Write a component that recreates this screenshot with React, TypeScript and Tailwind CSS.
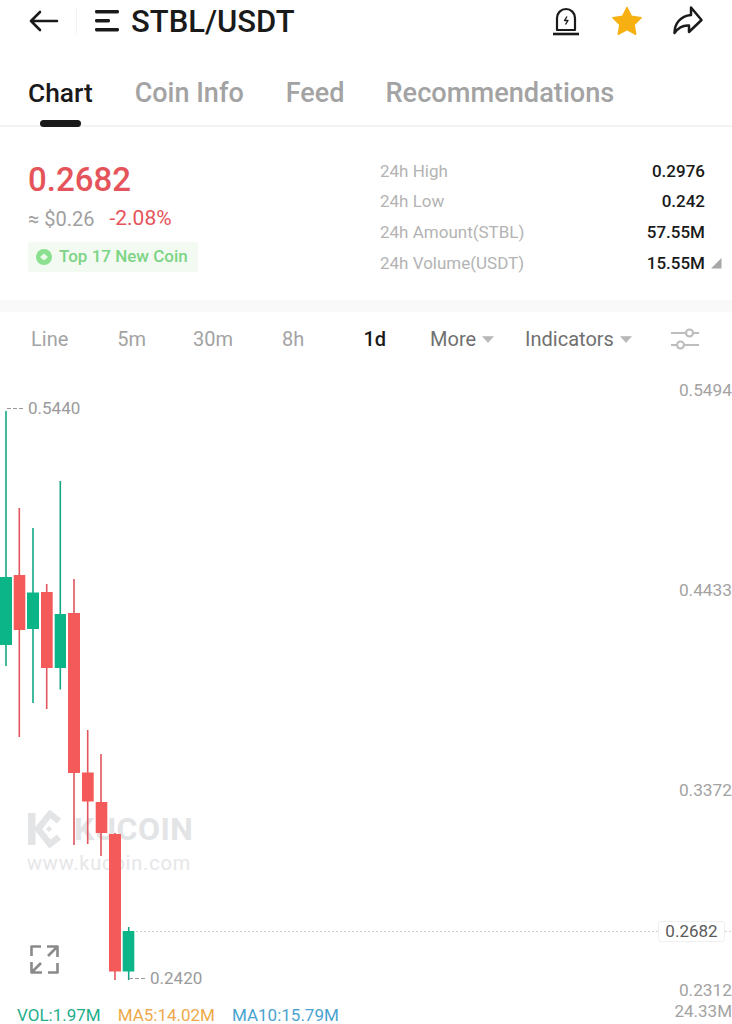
const candles = [
  { x: 6, hi: 411, lo: 666, l: 0, r: 12, t: 577, b: 645, up: true },
  { x: 19.3, hi: 508, lo: 737, l: 13.7, r: 25.3, t: 575, b: 630, up: false },
  { x: 33, hi: 528, lo: 703, l: 27, r: 39, t: 592.5, b: 629, up: true },
  { x: 46.7, hi: 584, lo: 709, l: 41, r: 52.7, t: 592, b: 668, up: false },
  { x: 60.3, hi: 481, lo: 689.5, l: 54.7, r: 66, t: 614, b: 668, up: true },
  { x: 74, hi: 579, lo: 845, l: 68, r: 80, t: 613, b: 773, up: false },
  { x: 87.7, hi: 730, lo: 844, l: 82, r: 93.7, t: 772.5, b: 801.5, up: false },
  { x: 101, hi: 754, lo: 856, l: 95.7, r: 107.3, t: 802, b: 833, up: false },
  { x: 115, hi: 833, lo: 980, l: 109, r: 121, t: 834, b: 971.5, up: false },
  { x: 128.7, hi: 927, lo: 980, l: 122.7, r: 134.3, t: 931, b: 971.5, up: true },
];
const CHART_TOP = 366;

const stats = [
  ["24h High", "0.2976"],
  ["24h Low", "0.242"],
  ["24h Amount(STBL)", "57.55M"],
  ["24h Volume(USDT)", "15.55M"],
];

function Caret() {
  return (
    <svg width="12" height="7" viewBox="0 0 12 7" className="ml-[6px] mt-[1px]">
      <path d="M0.500 0.500h11L6 6.500z" fill="#b8b8b8" stroke="#b8b8b8" strokeWidth="0.6" strokeLinejoin="round" />
    </svg>
  );
}

export default function App() {
  return (
    <div className="relative flex h-[1024px] w-[732px] flex-col overflow-hidden bg-white font-['Roboto',sans-serif]">
      {/* Header */}
      <div className="flex h-[42px] items-center pl-[29px] pr-[29px]">
        <svg width="30" height="24" viewBox="0 0 30 24" fill="none" stroke="#1a1a1a" strokeWidth="2.6" strokeLinecap="round" strokeLinejoin="round">
          <path d="M2 12h26M11 3l-9 9 9 9" />
        </svg>
        <div className="ml-[17px] h-[27px] w-[1px] bg-[#f2f2f2]" />
        <svg width="24" height="22" viewBox="0 0 24 22" className="ml-[18px]" fill="#1a1a1a">
          <rect x="0" y="0" width="24" height="3.4" rx="1.4" />
          <rect x="0" y="9" width="15" height="3.4" rx="1.4" />
          <rect x="0" y="18" width="24" height="3.4" rx="1.4" />
        </svg>
        <span className="ml-[12px] text-[31px] font-medium leading-none text-[#1a1a1a]">STBL/USDT</span>
        <div className="ml-auto flex items-center">
          <svg width="28" height="30" viewBox="0 0 28 30" fill="none" stroke="#1a1a1a" strokeWidth="2.2">
            <path d="M5 24V12a9 9 0 0 1 18 0v12z" strokeLinejoin="round" />
            <path d="M1 28h26" strokeWidth="2.6" />
            <path d="M15 10.500l-2.500 4h3.500l-2.500 4" strokeWidth="1.4" strokeLinejoin="round" />
          </svg>
          <svg width="32" height="30" viewBox="0 0 32 30" className="ml-[31px]" fill="#f7b011">
            <path d="M16 1.500l4.400 8.800 9.700 1.400-7 6.900 1.600 9.700-8.700-4.600-8.700 4.600 1.600-9.700-7-6.900 9.700-1.400z" stroke="#f7b011" strokeWidth="1.500" strokeLinejoin="round" />
          </svg>
          <svg width="32" height="30" viewBox="0 0 32 30" className="ml-[28px]" fill="none" stroke="#1a1a1a" strokeWidth="2.500" strokeLinejoin="round" strokeLinecap="round">
            <path d="M20 1.500L30.500 14L18 26V19.500C12 19 7 22 3.500 27C3.500 18 9 10 20 9Z" />
          </svg>
        </div>
      </div>

      {/* Tabs */}
      <div className="relative flex h-[85px] border-b-2 border-[#f3f3f3] pl-[28px] pt-[31px] text-[27px] font-medium leading-[40px] text-[#a3a3a3]">
        <div className="relative mr-[42px] text-[26.300px] text-[#1a1a1a]">
          Chart
          <div className="absolute left-[12px] top-[47px] h-[7px] w-[41px] rounded-full bg-[#1a1a1a]" />
        </div>
        <div className="mr-[42px]">Coin Info</div>
        <div className="mr-[41px]">Feed</div>
        <div className="text-[27.200px]">Recommendations</div>
      </div>

      {/* Stats */}
      <div className="flex h-[185px] border-b-[12px] border-[#f9f9f9] pl-[28px] pr-[12px] pt-[31px]">
        <div className="w-[352px]">
          <div className="text-[33px] font-medium leading-[43px] text-[#e5545a]">0.2682</div>
          <div className="mt-[3px] flex h-[29px] items-center text-[20px] leading-none">
            <span className="text-[#a0a0a0]">≈ $0.26</span>
            <span className="ml-[15px] text-[21px] text-[#e5545a]">-2.08%</span>
          </div>
          <div className="mt-[9px] flex h-[30px] w-[170px] items-center rounded-[2px] bg-[#f2faf2] pl-[8px] text-[17px] font-medium text-[#7dd485]">
            <svg width="16" height="16" viewBox="0 0 16 16">
              <circle cx="8" cy="8" r="8" fill="#8ae08f" />
              <path d="M8 4.500l4 3.500-4 3.500-4-3.500z" fill="#eaf9ea" />
            </svg>
            <span className="ml-[7px]">Top 17 New Coin</span>
          </div>
        </div>
        <div className="-mt-[2px] flex-1">
          {stats.map(([k, v], i) => (
            <div key={k} className="flex h-[30.700px] items-center justify-between text-[17px]">
              <span className="text-[#b3b3b3]">{k}</span>
              <span className="relative mr-[15px] font-medium text-[#1a1a1a]">
                {v}
                {i === 3 && (
                  <svg width="11" height="11" viewBox="0 0 11 11" className="absolute left-[calc(100%+6px)] top-[7px]">
                    <path d="M0 10.500L10.500 0v10.500z" fill="#a8a8a8" />
                  </svg>
                )}
              </span>
            </div>
          ))}
        </div>
      </div>

      {/* Time frames */}
      <div className="flex h-[54px] items-center text-[20px] text-[#a3a3a3]">
        <span className="ml-[31px]">Line</span>
        <span className="ml-[49px]">5m</span>
        <span className="ml-[47px]">30m</span>
        <span className="ml-[49px]">8h</span>
        <span className="ml-[59px] font-medium text-[#1a1a1a]">1d</span>
        <span className="ml-[44px] text-[#707070]">More</span>
        <Caret />
        <span className="ml-[31px] text-[#707070]">Indicators</span>
        <Caret />
        <svg width="30" height="24" viewBox="0 0 30 24" className="ml-[38px]" fill="none" stroke="#bdbdbd" strokeWidth="2.200">
          <path d="M1 6h15M23 6h6M1 18h6M14 18h15" />
          <circle cx="19.500" cy="6" r="3.500" />
          <circle cx="10.500" cy="18" r="3.500" />
        </svg>
      </div>

      {/* Chart */}
      <div className="relative flex-1">
        {/* Watermark */}
        <div className="absolute left-[27px] top-[444px] flex items-center">
          <svg width="36" height="38" viewBox="0 0 36 38" fill="none">
            <rect x="1" y="3" width="7.500" height="32" fill="#e3e4e6" />
            <path d="M32 11L23 4L11 19L23 34L32 27" stroke="#e3e4e6" strokeWidth="6.500" />
            <path d="M22 16l3 3-3 3-3-3z" fill="#e3e4e6" />
          </svg>
          <span className="ml-[11px] text-[32px] font-bold leading-none tracking-[0.5px] text-[#e3e4e6]">KUCOIN</span>
        </div>
        <div className="absolute left-[27px] top-[485px] text-[20px] leading-[24px] tracking-[0.8px] text-[#e6e6e8]">www.kucoin.com</div>

        <svg className="absolute left-0 top-0" width="732" height={1024 - CHART_TOP} viewBox={`0 ${CHART_TOP} 732 ${1024 - CHART_TOP}`}>
          {candles.map((c) => {
            const color = c.up ? "#0bb587" : "#f55a5a";
            return (
              <g key={c.x}>
                <rect x={c.x - 0.8} y={c.hi} width="1.600" height={c.lo - c.hi} fill={c.up ? "#14a885" : "#e0565c"} />
                <rect x={c.l} y={c.t} width={c.r - c.l} height={c.b - c.t} fill={color} />
              </g>
            );
          })}
          <path d="M136 931.500H658M725 931.500H732" stroke="#cfcfcf" strokeWidth="1" strokeDasharray="2 2" />
          <path d="M7 408.500h17M129 978.500h17" stroke="#9a9a9a" strokeWidth="1" strokeDasharray="4 2" />
        </svg>

        {/* Price labels */}
        <span className="absolute left-[28px] top-[32px] text-[17px] leading-[20px] text-[#9a9a9a]">0.5440</span>
        <span className="absolute left-[150px] top-[602px] text-[17px] leading-[20px] text-[#9a9a9a]">0.2420</span>
        <span className="absolute right-0 top-[14px] text-[17.300px] leading-[20px] text-[#a3a3a3]">0.5494</span>
        <span className="absolute right-0 top-[214px] text-[17.300px] leading-[20px] text-[#a3a3a3]">0.4433</span>
        <span className="absolute right-0 top-[414px] text-[17.300px] leading-[20px] text-[#a3a3a3]">0.3372</span>
        <span className="absolute left-[658px] top-[555px] flex h-[21px] w-[67px] items-center justify-center rounded-[3px] border border-[#efefef] bg-white text-[17px] text-[#5a5a5a]">0.2682</span>
        <span className="absolute right-0 top-[614px] text-[17.300px] leading-[20px] text-[#a3a3a3]">0.2312</span>
        <span className="absolute right-0 top-[635px] text-[17px] leading-[20px] text-[#a3a3a3]">24.33M</span>

        {/* Fullscreen */}
        <svg className="absolute left-[30px] top-[579px]" width="29" height="29" viewBox="0 0 29 29" fill="none" stroke="#8a8a8a" strokeWidth="2.600" strokeLinejoin="round">
          <path d="M1.500 11V1.500H11M27.500 18V27.500H18" />
          <path d="M17 1.500H27.500V12M27.500 1.500L18 11M1.500 17V27.500H12M1.500 27.500L11 18" />
        </svg>

        {/* Legend */}
        <div className="absolute bottom-0 left-[17px] flex h-[17px] items-center text-[17px]">
          <span className="text-[#1eae8c]">VOL:1.97M</span>
          <span className="ml-[17px] text-[#eda94a]">MA5:14.02M</span>
          <span className="ml-[17px] text-[#4aa3cf]">MA10:15.79M</span>
        </div>
      </div>
    </div>
  );
}
